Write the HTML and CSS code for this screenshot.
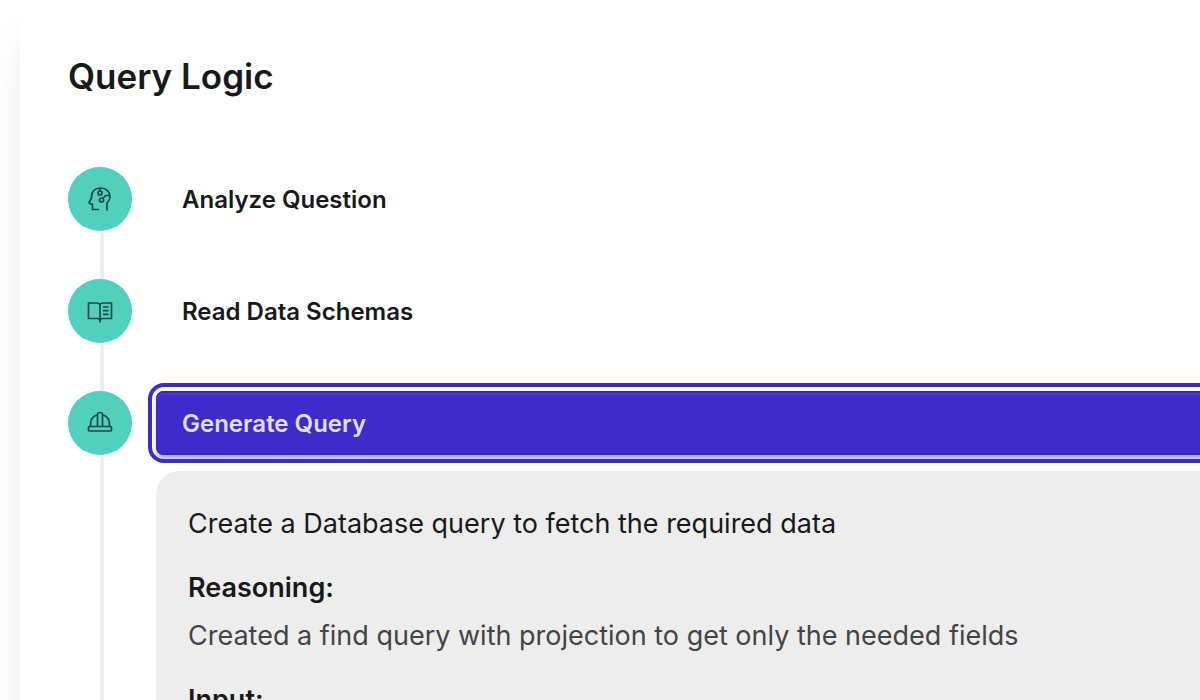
FILE: index.html
```
<!DOCTYPE html>
<html lang="en">
<head>
  <meta charset="UTF-8" />
  <meta name="viewport" content="width=device-width, initial-scale=1.0"/>
  <title>Query Logic</title>
  <link rel="stylesheet" href="styles.css">
</head>
<body>

  <main class="card">
    <h2 class="title">Query Logic</h2>

    <ol class="steps">
      <li class="step">
        <div class="marker">
          <span class="circle">
            <!-- Head icon -->
            <svg class="icon" viewBox="0 0 26 26" aria-hidden="true">
              <path d="M12 23.500H5.500V18H3.500L2 16.500L4.500 12V10.500C4.500 5.500 8 2 13.500 2C19 2 23 5.500 23 10.500C23 13 22 15 20 17V24.500"/>
              <path d="M13 2V5M15.800 12.500L18.500 9.500H23"/>
              <circle cx="13" cy="7" r="2"/>
              <circle cx="14.500" cy="14" r="2"/>
            </svg>
          </span>
        </div>
        <div class="content">
          <button type="button" class="step-button">Analyze Question</button>
        </div>
      </li>

      <li class="step">
        <div class="marker">
          <span class="circle">
            <!-- Book icon -->
            <svg class="icon" viewBox="0 0 26 26" aria-hidden="true">
              <path d="M13 6.500C12 5.200 11 5 10 5H1.500V20.500H10C11.500 20.500 13 21 13 22.500C13 21 14.500 20.500 16 20.500H24.500V5H16C15 5 14 5.200 13 6.500V24.500"/>
              <path d="M16 9H21.500M16 12.700H21.500M16 16.400H21.500"/>
            </svg>
          </span>
        </div>
        <div class="content">
          <button type="button" class="step-button">Read Data Schemas</button>
        </div>
      </li>

      <li class="step">
        <div class="marker">
          <span class="circle">
            <!-- Hard hat icon -->
            <svg class="icon" viewBox="0 0 26 26" aria-hidden="true">
              <rect x="1.500" y="16.500" width="23" height="4.500" rx="1"/>
              <path d="M3.500 16.500V14C3.500 9 6.500 6 10.500 4.800M15.500 4.800C19.500 6 22.500 9 22.500 14V16.500"/>
              <path d="M10.500 16.500V4.500C10.500 3 11.500 2.500 13 2.500C14.500 2.500 15.500 3 15.500 4.500V16.500"/>
            </svg>
          </span>
        </div>
        <div class="content">
          <button type="button" class="step-button active" aria-expanded="true">Generate Query</button>
          <div class="details">
            <p class="summary">Create a Database query to fetch the required data</p>
            <h3>Reasoning:</h3>
            <p class="reasoning">Created a find query with projection to get only the needed fields</p>
            <h3>Input:</h3>
          </div>
        </div>
      </li>
    </ol>
  </main>

</body>
</html>
```

FILE: styles.css
```
* {
  box-sizing: border-box;
}
body {
  margin: 0;
  height: 100vh;
  overflow: hidden;
  background: #fff;
  color: #18191b;
  font-family: Inter, "Liberation Sans", sans-serif;
}
.card {
  min-height: 120vh;
  margin: 0 -32px 0 20px;
  padding: 48px 0 48px 48px;
  background: #fff;
  border-radius: 32px;
  box-shadow: 0 32px 50px -10px rgba(0, 0, 0, 0.1), 0 16px 20px -12px rgba(0, 0, 0, 0.1);
}
.title {
  margin: 0 0 63px;
  font-size: 35px;
  line-height: 56px;
  font-weight: 600;
}
.steps {
  margin: 0;
  padding: 0;
  list-style: none;
}
.step {
  display: flex;
  gap: 24px;
}
.marker {
  display: flex;
  flex-direction: column;
  align-items: center;
  width: 64px;
}
.marker::after {
  content: "";
  flex: 1;
  width: 4px;
  margin-left: 4px;
  background: #ededed;
}
.circle {
  display: flex;
  justify-content: center;
  align-items: center;
  width: 64px;
  height: 64px;
  border-radius: 50%;
  background: #51d0bd;
}
.icon {
  width: 26px;
  height: 26px;
  fill: none;
  stroke: #1b4a47;
  stroke-width: 1.7;
  stroke-linejoin: round;
}
.content {
  flex: 1;
  padding-bottom: 48px;
}
.step-button {
  display: block;
  width: 100%;
  height: 64px;
  padding: 0 26px;
  border: none;
  border-radius: 8px;
  background: none;
  color: inherit;
  font-family: inherit;
  font-size: 24px;
  font-weight: 600;
  text-align: left;
  cursor: pointer;
}
.step-button.active {
  background: #3d2bcc;
  color: #e2defa;
  outline: 4px solid #3d2bcc;
  outline-offset: 4px;
  box-shadow: inset 0 2px #3826bd, inset 0 4px #4b39d0, inset 0 -2px #3826bd, 0 4px 3px -1px #b2a8ec, 0 4px 6px -2px #b2a8ec;
}
.details {
  margin-top: 16px;
  padding: 32px;
  background: #ededed;
  border-radius: 24px;
  font-size: 27px;
  line-height: 42px;
}
.details h3 {
  margin: 0;
  font-size: 27px;
  font-weight: 600;
}
.details p {
  margin: 0 0 22px;
}
.details .reasoning {
  margin-top: 6px;
  color: #444446;
}
```
